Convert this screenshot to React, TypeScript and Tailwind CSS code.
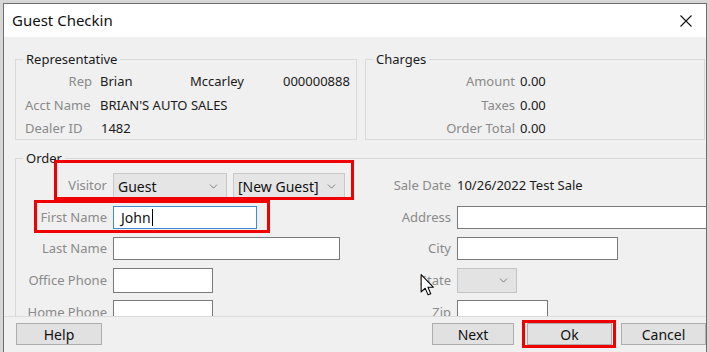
import { ChevronDown } from "lucide-react";

const FONT = { fontFamily: '"Noto Sans", "Open Sans", sans-serif' };

function Label({ children, className = "" }: { children: React.ReactNode; className?: string }) {
  return <span className={`text-[#8a8a8a] ${className}`}>{children}</span>;
}

function TextBox({ w, h = 23, value, focused }: { w: number; h?: number; value?: string; focused?: boolean }) {
  return (
    <div
      className={`flex items-center bg-white border px-[7px] text-[14px] text-[#111] ${
        focused ? "border-[#3d8ad6]" : "border-[#7a7a7a]"
      }`}
      style={{ width: w, height: h }}
    >
      {value}
      {focused && <span className="ml-[1px] h-[17px] w-px bg-black" />}
    </div>
  );
}

function Select({ w, value, disabled }: { w: number; value?: string; disabled?: boolean }) {
  return (
    <div
      className={`flex h-full items-center justify-between border pl-[4px] pr-[6px] text-[14px] text-[#111] ${
        disabled ? "bg-[#e3e3e3] border-[#c4c4c4]" : "bg-[#e5e5e5] border-[#c9c9c9]"
      }`}
      style={{ width: w }}
    >
      <span>{value}</span>
      <ChevronDown className="h-[13px] w-[13px] text-[#555]" strokeWidth={1.3} />
    </div>
  );
}

function Btn({ children, w }: { children: React.ReactNode; w: number }) {
  return (
    <div
      className="flex h-[22px] items-center justify-center border border-[#adadad] bg-[#e1e1e1] text-[14px] text-[#111]"
      style={{ width: w }}
    >
      {children}
    </div>
  );
}

function OrderRow({
  h,
  left,
  right,
  className = "",
}: {
  h: number;
  left: [string, React.ReactNode];
  right: [string, React.ReactNode];
  className?: string;
}) {
  return (
    <div className={`flex items-center ${className}`} style={{ height: h }}>
      <div className="flex h-full w-[344px] shrink-0 items-center gap-[6px]">
        <Label className="w-[91px] shrink-0 text-right">{left[0]}</Label>
        {left[1]}
      </div>
      <div className="flex h-full items-center gap-[6px]">
        <Label className="w-[91px] shrink-0 text-right">{right[0]}</Label>
        {right[1]}
      </div>
    </div>
  );
}

export default function App() {
  return (
    <div className="relative h-[352px] w-[709px] overflow-hidden bg-[#d6d6d6] pl-[3px] pt-[3px] text-[13px]" style={FONT}>
      {/* dialog */}
      <div className="h-[360px] w-[704px] border-l border-r border-t border-[#6e6e6e]">
        <div className="flex h-[33px] items-center justify-between bg-white pl-[8px] pr-[12px]">
          <span className="text-[15px] text-[#111]">Guest Checkin</span>
          <svg width="12" height="12" viewBox="0 0 12 12" className="mr-[2px]">
            <path d="M0.5 0.5 L11.5 11.5 M11.5 0.5 L0.5 11.5" stroke="#111" strokeWidth="1.1" />
          </svg>
        </div>

        <div className="bg-[#f0f0f0]">
          <div className="h-[279px] overflow-hidden pl-[11px] pt-[13px]">
            {/* top group boxes */}
            <div className="flex gap-[8px]">
              <fieldset className="h-[90px] w-[342px] min-w-0 shrink-0 border border-[#d9d9d9] p-0">
                <legend className="ml-[7px] px-[3px] leading-[18px] text-[#1a1a1a]">Representative</legend>
                <div className="pl-[9px] pt-[2px] text-[#1a1a1a]">
                  <div className="flex h-[24px] items-center gap-[8px]">
                    <Label className="w-[67px] text-right">Rep</Label>
                    <span className="w-[82px]">Brian</span>
                    <span className="w-[85px]">Mccarley</span>
                    <span>000000888</span>
                  </div>
                  <div className="flex h-[23px] items-center gap-[8px]">
                    <Label className="w-[67px]">Acct Name</Label>
                    <span>BRIAN'S AUTO SALES</span>
                  </div>
                  <div className="flex h-[23px] items-center gap-[8px]">
                    <Label className="w-[67px]">Dealer ID</Label>
                    <span className="pl-px">1482</span>
                  </div>
                </div>
              </fieldset>

              <fieldset className="h-[90px] w-[340px] min-w-0 shrink-0 border border-[#d9d9d9] p-0">
                <legend className="ml-[7px] px-[3px] leading-[18px] text-[#1a1a1a]">Charges</legend>
                <div className="pt-[2px] text-[#1a1a1a]">
                  {[
                    ["Amount", 24],
                    ["Taxes", 23],
                    ["Order Total", 23],
                  ].map(([l, h]) => (
                    <div key={l} className="flex items-center gap-[5px]" style={{ height: h as number }}>
                      <Label className="w-[149px] text-right">{l}</Label>
                      <span>0.00</span>
                    </div>
                  ))}
                </div>
              </fieldset>
            </div>

            {/* order group */}
            <fieldset className="mt-[9px] h-[200px] w-[720px] border border-[#d9d9d9] p-0">
              <legend className="ml-[7px] px-[3px] leading-[18px] text-[#1a1a1a]">Order</legend>
              <div className="pt-[6px]">
                <OrderRow
                  h={26}
                  left={[
                    "Visitor",
                    <div className="flex h-full gap-[6px]">
                      <Select w={114} value="Guest" />
                      <Select w={112} value="[New Guest]" />
                    </div>,
                  ]}
                  right={["Sale Date", <span className="text-[#1a1a1a]">10/26/2022 Test Sale</span>]}
                />
                <OrderRow
                  h={23}
                  className="mt-[7px]"
                  left={["First Name", <TextBox w={144} value="John" focused />]}
                  right={["Address", <TextBox w={260} />]}
                />
                <OrderRow
                  h={23}
                  className="mt-[8px]"
                  left={["Last Name", <TextBox w={227} />]}
                  right={["City", <TextBox w={161} />]}
                />
                <OrderRow
                  h={25}
                  className="mt-[8px]"
                  left={["Office Phone", <TextBox w={100} h={25} />]}
                  right={["State", <div className="h-full"><Select w={60} disabled /></div>]}
                />
                <OrderRow
                  h={25}
                  className="mt-[7px]"
                  left={["Home Phone", <TextBox w={100} h={25} />]}
                  right={["Zip", <TextBox w={91} h={25} />]}
                />
              </div>
            </fieldset>
          </div>

          {/* button bar */}
          <div className="flex h-[40px] justify-between border-t border-[#dcdcdc] pl-[12px] pt-[6px]">
            <Btn w={86}>Help</Btn>
            <div className="flex">
              <Btn w={82}>Next</Btn>
              <div className="ml-[13px]">
                <Btn w={85}>Ok</Btn>
              </div>
              <div className="ml-[9px]">
                <Btn w={85}>Cancel</Btn>
              </div>
            </div>
          </div>
        </div>
      </div>

      {/* red annotation boxes */}
      <div className="absolute left-[54px] top-[160px] h-[40px] w-[300px] border-[3px] border-[#f00000]" />
      <div className="absolute left-[34px] top-[200px] h-[33px] w-[236px] border-[3px] border-[#f00000]" />
      <div className="absolute left-[522px] top-[320px] h-[28px] w-[94px] border-[3px] border-[#f00000]" />

      {/* mouse pointer */}
      <svg className="absolute left-[420px] top-[274px]" width="15" height="22" viewBox="0 0 12 19">
        <polygon
          points="0.5,0.5 0.5,15.5 4,12.3 6.5,18 8.8,17 6.4,11.4 11,11.4"
          fill="#fff"
          stroke="#000"
          strokeWidth="0.9"
          strokeLinejoin="round"
        />
      </svg>
    </div>
  );
}
